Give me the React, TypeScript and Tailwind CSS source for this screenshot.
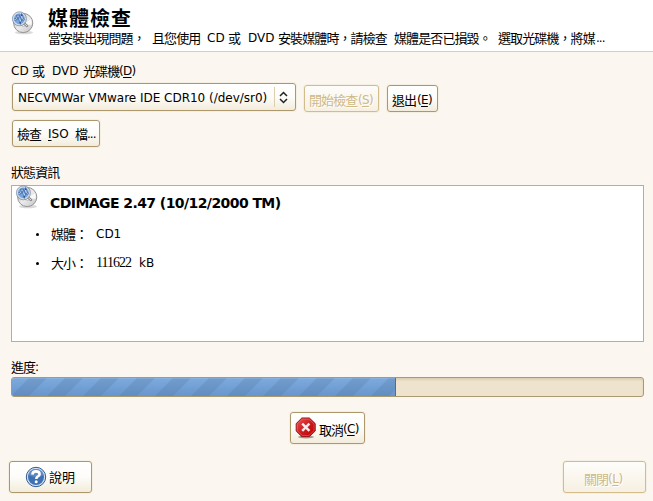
import type { ReactNode } from "react";

// Chinese run on a fixed 12px advance
function Han({ children, className = "" }: { children: ReactNode; className?: string }) {
  return <span className={`font-['Noto_Sans_CJK_TC',sans-serif] text-[13px] tracking-[-0.9px] whitespace-pre ${className}`}>{children}</span>;
}

function Lat({ children, className = "" }: { children: ReactNode; className?: string }) {
  return <span className={`whitespace-pre ${className}`}>{children}</span>;
}

function Key({ children }: { children: ReactNode }) {
  return <span className="underline decoration-1 underline-offset-2">{children}</span>;
}

function DiscIcon() {
  return (
    <svg width="24" height="24" viewBox="0 0 24 24" className="block shrink-0">
      <defs>
        <linearGradient id="disc" x1="0" y1="0" x2="1" y2="1">
          <stop offset="0" stopColor="#b4b4b4" />
          <stop offset="0.5" stopColor="#ececec" />
          <stop offset="1" stopColor="#c2c2c2" />
        </linearGradient>
      </defs>
      <ellipse cx="13" cy="21.5" rx="9" ry="1.8" fill="#000" opacity="0.15" />
      <circle cx="12.2" cy="12" r="9.6" fill="url(#disc)" stroke="#8b8b8b" strokeWidth="0.9" />
      <path d="M13 13 L20 8 A9 9 0 0 1 20.5 14 Z" fill="#fff" opacity="0.8" />
      <circle cx="12.5" cy="13" r="2.4" fill="#eee" stroke="#aaa" strokeWidth="0.7" />
      <path d="M13 12.3 L16 15" stroke="#8a8a8a" strokeWidth="2.4" strokeLinecap="round" />
      <path d="M13 12.3 L15.8 14.8" stroke="#ddd" strokeWidth="1" strokeLinecap="round" />
      <circle cx="8.4" cy="7.8" r="6.1" fill="#7ba4d8" stroke="#d3dce7" strokeWidth="1.4" />
      <circle cx="8.4" cy="7.8" r="7" fill="none" stroke="#71839a" strokeWidth="0.7" />
      <path d="M3.4 8.6 L5.4 8.2 L6.4 4.8 H7.6 L9.2 10.6 L10.8 5 L11.8 8.4 L13.4 8" fill="none" stroke="#2455a0" strokeWidth="2" />
      <path d="M3.4 8.6 L5.4 8.2 L6.4 4.8 H7.6 L9.2 10.6 L10.8 5 L11.8 8.4 L13.4 8" fill="none" stroke="#dbe9ff" strokeWidth="0.8" />
    </svg>
  );
}

function StopIcon() {
  return (
    <svg width="22" height="22" viewBox="0 0 22 22" className="block shrink-0">
      <defs>
        <linearGradient id="stop" x1="0" y1="0" x2="1" y2="1">
          <stop offset="0" stopColor="#ee5555" />
          <stop offset="0.5" stopColor="#c91d22" />
          <stop offset="1" stopColor="#c40000" />
        </linearGradient>
      </defs>
      <ellipse cx="11" cy="20" rx="8" ry="1.5" fill="#000" opacity="0.35" />
      <path d="M6.8 1 H14.4 L20.2 6.6 V14 L14.4 19.6 H6.8 L1.2 14 V6.6 Z" fill="url(#stop)" stroke="#9d1014" />
      <path d="M7.2 2.1 H14 L19.1 7 V13.6 L14 18.5 H7.2 L2.3 13.6 V7 Z" fill="none" stroke="#ef8888" strokeWidth="0.7" opacity="0.6" />
      <path d="M7.2 6.6 L14.4 13.8 M14.4 6.6 L7.2 13.8" stroke="#f6eeee" strokeWidth="2.4" />
    </svg>
  );
}

function HelpIcon() {
  return (
    <svg width="22" height="22" viewBox="0 0 22 22" className="block shrink-0">
      <circle cx="11" cy="11" r="9.7" fill="#d5e1f0" stroke="#2f5a93" />
      <circle cx="11" cy="11" r="8" fill="#3d71b4" />
      <path d="M3.5 9 A7.7 7.7 0 0 1 18.5 9 Q11 13 3.5 9 Z" fill="#7499cb" opacity="0.6" />
      <path d="M7.4 8.6 Q7.5 5.4 11 5.4 Q14.6 5.4 14.6 8.2 Q14.6 9.7 12.6 10.7 Q11.3 11.4 11.3 13" fill="none" stroke="#fff" strokeWidth="2.6" />
      <circle cx="11.2" cy="15.7" r="1.5" fill="#fff" />
    </svg>
  );
}

const button = "flex items-center rounded-[3px] border border-[#ad986c] bg-linear-to-b from-white via-[#fdfcf9] to-[#f3ecdc] shadow-[0_0_0_1px_#f5efe2]";
const disabled = "flex items-center rounded-[3px] border border-[#d2bc8a] bg-linear-to-b from-[#fefdfb] to-[#f7f0e2] text-[#cdb988] shadow-[0_0_0_1px_#f5efe2] [text-shadow:1px_1px_0_#fff]";

export default function App() {
  return (
    <div className="flex h-[501px] w-[653px] flex-col overflow-hidden bg-[#fbf7f0] font-['DejaVu_Sans',sans-serif] text-[12px] leading-[16px] text-black">
      <header className="flex h-[52px] shrink-0 border-b border-[#dfceae] bg-white pt-[6px] pl-[11px]">
        <div className="pt-[5px]"><DiscIcon /></div>
        <div className="ml-[13px] flex flex-col">
          <h1 className="h-[24px] font-['Noto_Sans_CJK_TC',sans-serif] text-[20px] leading-[23px] font-bold tracking-[1px]">媒體檢查</h1>
          <div className="flex h-[16px] items-center whitespace-pre">
            <Han className="w-[104px]">當安裝出現問題，</Han>
            <Han className="w-[55px]">且您使用</Han>
            <Lat className="w-[21px]">CD</Lat>
            <Han className="w-[20px]">或</Han>
            <Lat className="w-[30px]">DVD</Lat>
            <Han className="w-[116px]">安裝媒體時，請檢查</Han>
            <Han className="w-[104px]">媒體是否已損毀。</Han>
            <Han className="w-[98px]">選取光碟機，將媒</Han>
            <Lat className="tracking-[-1px]">...</Lat>
          </div>
        </div>
      </header>

      <main className="flex flex-1 flex-col pt-[11px] pr-[9px] pl-[11px]">
        <div className="flex h-[16px] items-center">
          <Lat className="w-[21px]">CD</Lat>
          <Han className="w-[20px]">或</Han>
          <Lat className="w-[31px]">DVD</Lat>
          <Han className="w-[36px]">光碟機</Han>
          <Lat className="tracking-[-0.7px]">(<Key>D</Key>)</Lat>
        </div>

        <div className="mt-[4px] flex items-start">
          <div className={`${button} ml-px h-[28px] w-[284px]`}>
            <Lat className="w-[261px] pt-px pl-[5px] tracking-[-0.02px]">NECVMWar VMware IDE CDR10 (/dev/sr0)</Lat>
            <div className="flex h-[20px] items-center border-l border-[#dfceae] pl-[4px]">
              <svg width="9" height="13" viewBox="0 0 9 13" fill="none" stroke="#222" strokeWidth="1.5">
                <path d="M1 5 L4.5 1.5 L8 5 M1 8 L4.5 11.5 L8 8" />
              </svg>
            </div>
          </div>
          <div className={`${disabled} mt-[2px] ml-[8px] h-[27px] w-[75px] pt-[2px] pl-[4px]`}>
            <Han className="w-[49px]">開始檢查</Han><Lat className="tracking-[-0.7px]">(<Key>S</Key>)</Lat>
          </div>
          <div className={`${button} mt-[2px] ml-[8px] h-[27px] w-[51px] pt-[2px] pl-[4px]`}>
            <Han className="w-[25px]">退出</Han><Lat className="tracking-[-0.7px]">(<Key>E</Key>)</Lat>
          </div>
        </div>

        <div className={`${button} mt-[8px] ml-px h-[27px] w-[88px] pt-px pl-[4px]`}>
          <Han className="w-[31px]">檢查</Han><Lat className="w-[27px]"><Key>I</Key>SO</Lat><Han className="w-[12px]">檔</Han><Lat className="tracking-[-1px]">...</Lat>
        </div>

        <div className="mt-[17px] flex h-[16px] items-center"><Han>狀態資訊</Han></div>

        <section className="mt-[5px] flex h-[157px] flex-col border border-[#bfae84] bg-white pl-[3px]">
          <div className="flex h-[36px]">
            <div className="mt-[-1px]"><DiscIcon /></div>
            <h2 className="pt-[9px] pl-[11px] text-[14px] leading-[16px] font-bold tracking-[-0.57px]">CDIMAGE 2.47 (10/12/2000 TM)</h2>
          </div>
          <ul className="flex flex-col gap-[13px] pt-[4px] pl-[21px]">
            <li className="flex h-[16px] items-center">
              <span className="mr-[12px] size-[3px] rounded-full bg-black" />
              <Han className="w-[45px]">媒體：</Han>
              <Lat>CD1</Lat>
            </li>
            <li className="flex h-[16px] items-center">
              <span className="mr-[12px] size-[3px] rounded-full bg-black" />
              <Han className="w-[45px]">大小：</Han>
              <span className="w-[43px] font-['Liberation_Serif',serif] text-[14px] tracking-[-1px]">111622</span>
              <Lat>kB</Lat>
            </li>
          </ul>
        </section>

        <div className="mt-[16px] flex h-[17px] items-center"><Han className="w-[24px]">進度</Han><Lat>:</Lat></div>

        <div className="mt-[2px] flex h-[20px] shrink-0 overflow-hidden rounded-[3px] border border-[#a99a72] bg-[#eee3cc] shadow-[inset_0_2px_2px_#dccfb1]">
          <div className="w-[384px] border-r border-[#46709f] bg-linear-to-b from-[#7eabdd] to-[#6795cd]">
            <svg width="383" height="18" className="block">
              <defs>
                <pattern id="stripes" width="36" height="18" patternUnits="userSpaceOnUse" x="-1">
                  <path d="M18 0 H36 L18 18 H0 Z" fill="#50779f" opacity="0.27" />
                </pattern>
              </defs>
              <rect width="383" height="18" fill="url(#stripes)" />
              <path d="M0 .5 H383" stroke="#a4c2e5" opacity="0.3" />
            </svg>
          </div>
        </div>

        <div className="mt-[15px] flex justify-center">
          <div className={`${button} h-[32px] w-[75px] pl-[4px]`}>
            <StopIcon />
            <Han className="ml-[2px] w-[24px] pt-[3px]">取消</Han><Lat className="pt-[2px] tracking-[-0.7px]">(<Key>C</Key>)</Lat>
          </div>
        </div>

        <footer className="mt-[17px] mr-[-2px] ml-[-2px] flex justify-between">
          <div className={`${button} h-[32px] w-[83px] pl-[15px]`}>
            <HelpIcon /><Han className="ml-[2px] text-[13px] tracking-[0px]">說明</Han>
          </div>
          <div className={`${disabled} h-[32px] w-[83px] pt-[3px] pl-[20px]`}>
            <Han className="w-[24px]">關閉</Han><Lat className="tracking-[-0.5px]">(<Key>L</Key>)</Lat>
          </div>
        </footer>
      </main>
    </div>
  );
}
